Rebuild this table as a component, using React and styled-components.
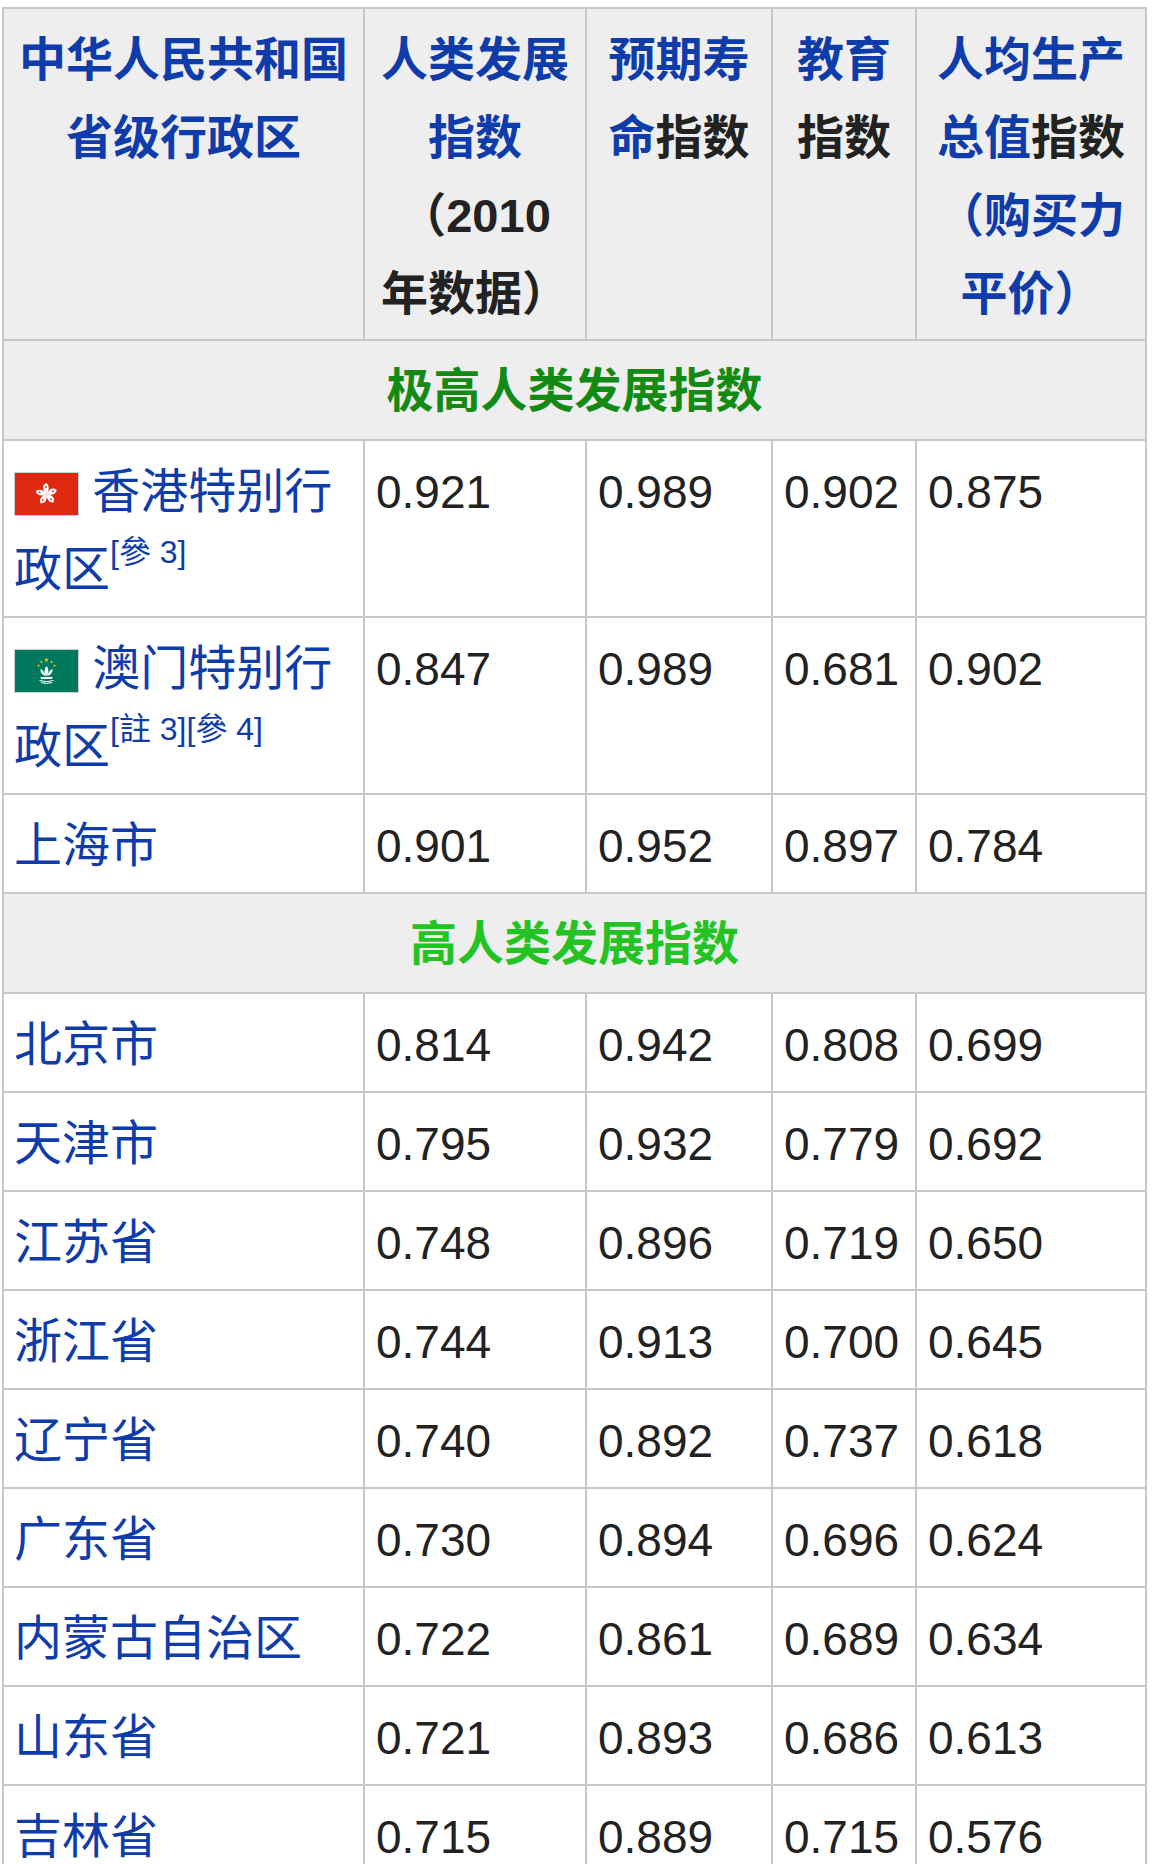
import React from "react";
import styled, { createGlobalStyle } from "styled-components";

const GlobalStyle = createGlobalStyle`
  body {
    margin: 0;
    background: #ffffff;
    font-family: "Liberation Sans", "Noto Sans CJK SC", sans-serif;
  }
`;

const Page = styled.div`
  padding: 7px 10px 0 2px;
`;

const Table = styled.table`
  border-collapse: collapse;
  table-layout: fixed;
  width: 1143px;
  font-size: 46px;
  line-height: 66px;
  color: #222222;
`;

const Col = styled.col`
  width: ${(p) => p.$w}px;
`;

const HeadCell = styled.th`
  background: #eeeeee;
  border: 2px solid #c8c8c8;
  padding: 12px 11px 6px;
  font-size: 47px;
  line-height: 78px;
  text-align: center;
  vertical-align: top;
  font-weight: 700;
  color: #222222;
`;

const SectionCell = styled.th`
  background: #eeeeee;
  border: 2px solid #c8c8c8;
  padding: 17px 11px 15px;
  font-size: 47px;
  text-align: center;
  font-weight: 700;
  color: ${(p) => p.$color};
`;

const Cell = styled.td`
  border: 2px solid #c8c8c8;
  padding: ${(p) => (p.$name ? "18px 11px 13px 10px" : "18px 11px 13px")};
  vertical-align: top;
  text-align: left;
  font-size: ${(p) => (p.$name ? "48px" : "46px")};
  white-space: ${(p) => (p.$name ? "normal" : "nowrap")};
`;

const Link = styled.span`
  color: #0f3cab;
`;

const Ref = styled.sup`
  color: #0f3cab;
  font-size: 32px;
  line-height: 54px;
  font-weight: 400;
  vertical-align: 23px;
`;

const FlagBox = styled.svg`
  width: 63px;
  height: 42px;
  vertical-align: -8px;
  border: 1px solid #cfcfcf;
`;

const HongKongFlag = () => (
  <FlagBox viewBox="0 0 63 42">
    <rect width="63" height="42" fill="#de2910" />
    {[0, 72, 144, 216, 288].map((a) => (
      <g key={a} transform={`rotate(${a} 31.5 21)`}>
        <path
          d="M31.5 21 C27 17 27 12 31 10 C34 12 35 16 31.5 21 Z"
          fill="#ffffff"
        />
        <circle cx="31" cy="14" r="0.9" fill="#de2910" />
      </g>
    ))}
  </FlagBox>
);

const Star = ({ x, y, r }) => {
  const pts = [];
  for (let i = 0; i < 10; i++) {
    const rr = i % 2 === 0 ? r : r * 0.42;
    const ang = (Math.PI / 5) * i - Math.PI / 2;
    pts.push(`${(x + rr * Math.cos(ang)).toFixed(2)},${(y + rr * Math.sin(ang)).toFixed(2)}`);
  }
  return <polygon points={pts.join(" ")} fill="#f9d616" />;
};

const MacauFlag = () => (
  <FlagBox viewBox="0 0 63 42">
    <rect width="63" height="42" fill="#00785e" />
    <Star x={31.5} y={10} r={2.4} />
    <Star x={26.5} y={12} r={1.5} />
    <Star x={36.5} y={12} r={1.5} />
    <Star x={23.5} y={15.5} r={1.5} />
    <Star x={39.5} y={15.5} r={1.5} />
    <path d="M31.5 16 C29 19 29 23 31.5 26 C34 23 34 19 31.5 16 Z" fill="#ffffff" />
    <path d="M31 26 C27 25 25 22 25.5 19 C28 20 30 23 31 26 Z" fill="#ffffff" />
    <path d="M32 26 C36 25 38 22 37.5 19 C35 20 33 23 32 26 Z" fill="#ffffff" />
    <path d="M25 27 L38 27 L36.5 29 L26.5 29 Z" fill="#ffffff" />
    <path d="M24.5 30.5 Q31.5 33 38.5 30.5" stroke="#ffffff" strokeWidth="1" fill="none" />
    <path d="M26 32.5 Q31.5 34.5 37 32.5" stroke="#ffffff" strokeWidth="1" fill="none" />
  </FlagBox>
);

const veryHigh = [
  {
    flag: <HongKongFlag />,
    name: "香港特别行政区",
    refs: "[參 3]",
    v: ["0.921", "0.989", "0.902", "0.875"],
  },
  {
    flag: <MacauFlag />,
    name: "澳门特别行政区",
    refs: "[註 3][參 4]",
    v: ["0.847", "0.989", "0.681", "0.902"],
  },
  { name: "上海市", v: ["0.901", "0.952", "0.897", "0.784"] },
];

const high = [
  { name: "北京市", v: ["0.814", "0.942", "0.808", "0.699"] },
  { name: "天津市", v: ["0.795", "0.932", "0.779", "0.692"] },
  { name: "江苏省", v: ["0.748", "0.896", "0.719", "0.650"] },
  { name: "浙江省", v: ["0.744", "0.913", "0.700", "0.645"] },
  { name: "辽宁省", v: ["0.740", "0.892", "0.737", "0.618"] },
  { name: "广东省", v: ["0.730", "0.894", "0.696", "0.624"] },
  { name: "内蒙古自治区", v: ["0.722", "0.861", "0.689", "0.634"] },
  { name: "山东省", v: ["0.721", "0.893", "0.686", "0.613"] },
  { name: "吉林省", v: ["0.715", "0.889", "0.715", "0.576"] },
];

const Row = ({ item }) => (
  <tr>
    <Cell $name>
      {item.flag}
      {item.flag && " "}
      <Link>{item.name}</Link>
      {item.refs && <Ref>{item.refs}</Ref>}
    </Cell>
    {item.v.map((n, i) => (
      <Cell key={i}>{n}</Cell>
    ))}
  </tr>
);

const App = () => {
  return (
    <Page>
      <GlobalStyle />
      <Table>
        <colgroup>
          <Col $w={361} />
          <Col $w={222} />
          <Col $w={186} />
          <Col $w={144} />
          <Col $w={230} />
        </colgroup>
        <thead>
          <tr>
            <HeadCell>
              <Link>中华人民共和国省级行政区</Link>
            </HeadCell>
            <HeadCell>
              <Link>人类发展指数</Link>
              <br />（2010
              <br />
              年数据）
            </HeadCell>
            <HeadCell>
              <Link>预期寿命</Link>指数
            </HeadCell>
            <HeadCell>
              <Link>教育</Link>指数
            </HeadCell>
            <HeadCell>
              <Link>人均生产总值</Link>指数<Link>（购买力平价）</Link>
            </HeadCell>
          </tr>
        </thead>
        <tbody>
          <tr>
            <SectionCell colSpan={5} $color="#138a13">
              极高人类发展指数
            </SectionCell>
          </tr>
          {veryHigh.map((item) => (
            <Row key={item.name} item={item} />
          ))}
          <tr>
            <SectionCell colSpan={5} $color="#22c322">
              高人类发展指数
            </SectionCell>
          </tr>
          {high.map((item) => (
            <Row key={item.name} item={item} />
          ))}
        </tbody>
      </Table>
    </Page>
  );
};

export default App;
